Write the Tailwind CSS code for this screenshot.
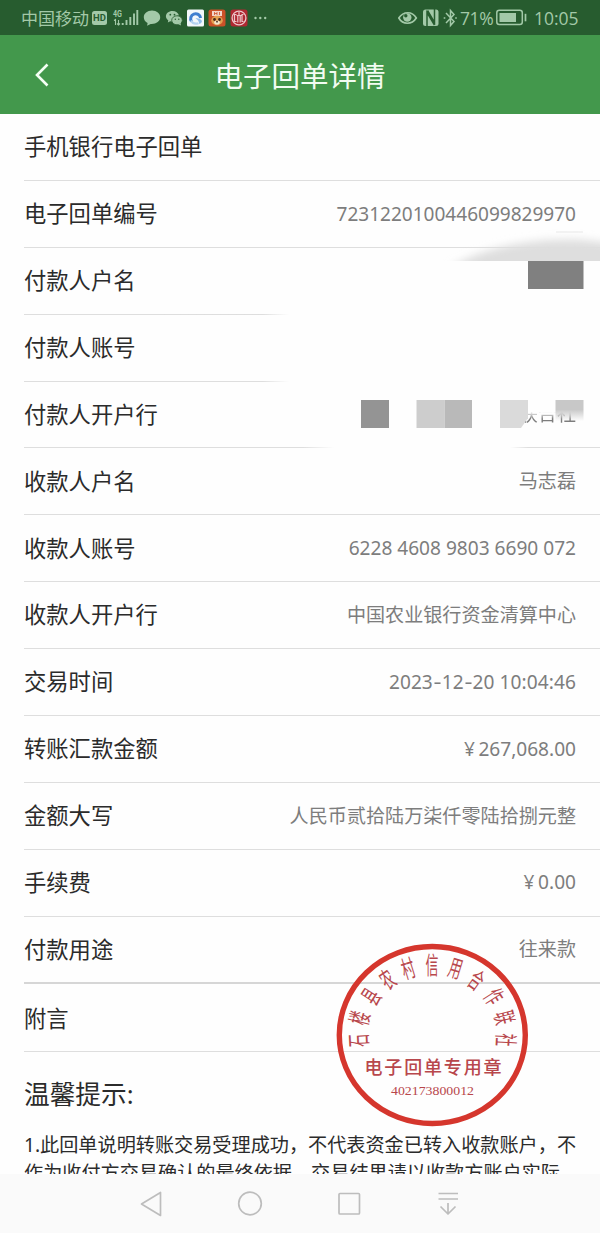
<!DOCTYPE html>
<html lang="zh-CN">

<head>
    <meta charset="UTF-8">
    <meta name="viewport" content="width=device-width, initial-scale=1.0">
    <title>电子回单详情</title>
    <script src="https://cdn.jsdelivr.net/npm/@tailwindcss/browser@4"></script>
</head>

<body class="bg-white">
    <div class="relative flex h-[1233px] w-[600px] flex-col overflow-hidden bg-[#fefefe] font-['Noto_Sans','Noto_Sans_CJK_SC',sans-serif] text-[#2b2b2b]">
        <!-- Status bar -->
        <div class="flex h-[35px] shrink-0 items-center justify-between bg-[#275c2f] pr-[21px] pl-[21px] text-[#a3c9a8]">
            <div class="flex items-center">
                <span class="w-[68px] pt-px text-[17px] leading-[35px] whitespace-nowrap">中国移动</span>
                <svg class="ml-[3px]" width="158" height="20" viewBox="92 8 158 20">
                    <rect x="92" y="11" width="15" height="14" rx="2.5" fill="#a3c9a8" />
                    <text x="99.5" y="21.3" text-anchor="middle" font-size="9.500" font-weight="bold" font-family="Roboto, sans-serif" fill="#275c2f">HD</text>
                    <text x="113" y="16.7" font-size="9.500" font-weight="bold" font-family="Roboto, sans-serif" fill="#a3c9a8" textLength="9" lengthAdjust="spacingAndGlyphs">4G</text>
                    <path d="M114 20.500l1.500-1v5.500M118.500 20v5m-1.500-1.500l1.500 1.500l1.500-1.500" fill="none" stroke="#a3c9a8" stroke-width="1.100" />
                    <path d="M122.700 23v2M126.500 20v5M130.300 17v8M134 13.500v11.500M137.300 10v15" stroke="#a3c9a8" stroke-width="1.900" />
                    <path d="M152 10.500c-4.700 0-8.200 3-8.200 6.700c0 2.500 1.500 4.600 3.800 5.800l-.5 2.800l3.600-1.900c5.300.4 9.500-2.600 9.500-6.700c0-3.700-3.500-6.700-8.200-6.700z" fill="#a3c9a8" />
                    <path d="M172.500 11c-3.800 0-6.600 2.400-6.600 5.300c0 1.700 1 3.100 2.400 4.100l-.5 2l2.400-1.200c.9.200 1.800.3 2.700.3c-.3-3.400 2.500-6 6.100-6c-.7-2.700-3.300-4.500-6.500-4.500z" fill="#a3c9a8" />
                    <ellipse cx="177" cy="20.300" rx="5.300" ry="4.500" fill="#a3c9a8" stroke="#275c2f" stroke-width=".8" />
                    <path d="M178 24l3 1.500l-.5-2.500z" fill="#a3c9a8" />
                    <g fill="#275c2f"><circle cx="170.300" cy="14.700" r=".9" /><circle cx="174.500" cy="14.700" r=".9" /><circle cx="175.300" cy="19.300" r=".7" /><circle cx="178.800" cy="19.300" r=".7" /></g>
                    <rect x="187" y="9.500" width="17" height="17" rx="1.500" fill="#f3f8fb" />
                    <path d="M191.500 21.500A5 5 0 1 1 200.600 18" fill="none" stroke="#3f7fd0" stroke-width="3" />
                    <path d="M191 20.500c1.500 2.800 4.500 3.800 7.500 2.700" fill="none" stroke="#b5d3f0" stroke-width="2.200" />
                    <path d="M195.500 18.500c2.500-.5 5 .3 6.500 2.500c-.2 1.500-1.200 2.700-2.800 3c0-2.500-1.200-4.500-3.700-5.500z" fill="#8fbcea" />
                    <rect x="208.500" y="9.500" width="17" height="17" rx="2.500" fill="#cb5128" />
                    <path d="M212 11h10v5h-10z" fill="#f3d5c8" />
                    <path d="M214.500 12v3M217 12v3M219.500 12v3M214.500 13.500h2.500" stroke="#cb5128" stroke-width=".8" />
                    <ellipse cx="217" cy="20.500" rx="5.800" ry="4.700" fill="#e2a052" />
                    <circle cx="214.500" cy="19.500" r="1.400" fill="#492b1c" /><circle cx="219.500" cy="19.500" r="1.400" fill="#492b1c" />
                    <ellipse cx="217" cy="22.500" rx="2.800" ry="2" fill="#f5e6ce" /><circle cx="217" cy="21.700" r=".9" fill="#492b1c" />
                    <rect x="230.500" y="9.500" width="17" height="17" rx="2.500" fill="#b02832" />
                    <circle cx="239" cy="18" r="6.900" fill="none" stroke="#ecc6c9" stroke-width="1.300" />
                    <path d="M236.500 14.500h-2v7h2M237.800 16v6.500M239 12v3.500M236.500 15.500h5M240.200 16v6.500M243.500 14.500h-1.500v7h1.500" fill="none" stroke="#ecc6c9" stroke-width="1.200" />
                </svg>
                <svg class="ml-1" width="14" height="4" viewBox="0 0 14 4" fill="#a3c9a8">
                    <circle cx="1.500" cy="2" r="1.200" /><circle cx="6.300" cy="2" r="1.200" /><circle cx="11.200" cy="2" r="1.200" />
                </svg>
            </div>
            <div class="flex items-center">
                <svg width="62" height="20" viewBox="399 8 62 20" fill="none" stroke="#a3c9a8">
                    <path d="M399.800 18c4.500-7 13.500-7 17.500 0c-4.500 7-13.500 7-17.500 0z" stroke-width="1.700" />
                    <circle cx="408.300" cy="17.500" r="4.200" fill="#a3c9a8" stroke="none" />
                    <circle cx="406.800" cy="15.700" r="1.700" fill="#275c2f" stroke="none" />
                    <rect x="424" y="9.500" width="15.500" height="16.500" rx="2.500" fill="#a3c9a8" stroke="none" />
                    <path d="M428 26.500v-14l7.500 12.500M435.500 9v13.500l-7-12" stroke="#275c2f" stroke-width="1.500" />
                    <path d="M447 13l8 8.500l-3.500 4v-15l3.500 4l-8 8.500" stroke-width="1.500" />
                    <path d="M445.500 17.200v1.600M457 17.200v1.600" stroke-width="1.600" />
                </svg>
                <span class="w-[36px] pt-0.5 font-['Open_Sans'] text-[17.500px] leading-[35px] tracking-[-0.4px]">71%</span>
                <svg width="32" height="17" viewBox="0 0 32 17" fill="none" stroke="#a3c9a8">
                    <rect x=".8" y="1.300" width="25.500" height="14.200" rx="2.500" stroke-width="1.500" />
                    <rect x="3.500" y="4" width="16.500" height="9" fill="#a3c9a8" stroke="none" />
                    <path d="M29.500 4.800v7.500" stroke-width="1.700" />
                </svg>
                <span class="ml-[6px] w-[45px] pt-0.5 font-['Open_Sans'] text-[17.500px] leading-[35px] whitespace-nowrap">10:05</span>
            </div>
        </div>

        <!-- Title bar -->
        <header class="grid h-[79px] shrink-0 grid-cols-[100px_1fr_100px] items-center bg-[#43984c]">
            <svg class="mt-px ml-[34px]" width="16" height="24" viewBox="0 0 16 24" fill="none" stroke="#f4fff4" stroke-width="2.600">
                <path d="M13.500 1.500L3 12l10.500 10.500" />
            </svg>
            <h1 class="pt-1 text-center text-[28.500px] leading-[75px] text-[#f2fcf2]">电子回单详情</h1>
        </header>

        <!-- Receipt rows -->
        <main class="flex flex-1 flex-col overflow-hidden pl-6">
            <div class="flex h-[66.900px] shrink-0 items-center border-b border-[#dedede] pr-6">
                <span class="text-[22.300px]">手机银行电子回单</span>
            </div>
            <div class="flex h-[66.900px] shrink-0 items-center justify-between border-b border-[#dedede] pr-6">
                <span class="text-[22.300px]">电子回单编号</span>
                <span class="text-[19.050px] text-[#7d7d7d]">7231220100446099829970</span>
            </div>
            <div class="flex h-[66.900px] shrink-0 flex-col">
                <div class="flex flex-1 items-center text-[22.300px]">付款人户名</div>
                <div class="h-px w-[265px] bg-linear-to-r from-[#dedede] from-90% to-transparent"></div>
            </div>
            <div class="flex h-[66.900px] shrink-0 flex-col">
                <div class="flex flex-1 items-center text-[22.300px]">付款人账号</div>
                <div class="h-px w-[265px] bg-linear-to-r from-[#dedede] from-90% to-transparent"></div>
            </div>
            <div class="flex h-[66.900px] shrink-0 flex-col">
                <div class="flex flex-1 items-center justify-between pr-6">
                    <span class="text-[22.300px]">付款人开户行</span>
                    <span class="bg-linear-to-b from-transparent from-40% to-[#7d7d7d] to-65% bg-clip-text text-[19.100px] text-transparent">联合社</span>
                </div>
                <div class="flex justify-between">
                    <div class="h-px w-[310px] bg-linear-to-r from-[#dedede] from-90% to-transparent"></div>
                    <div class="h-px w-[90px] bg-linear-to-l from-[#dedede] from-80% to-transparent"></div>
                </div>
            </div>
            <div class="flex h-[66.900px] shrink-0 items-center justify-between border-b border-[#dedede] pr-6">
                <span class="text-[22.300px]">收款人户名</span>
                <span class="text-[19.100px] text-[#7d7d7d]">马志磊</span>
            </div>
            <div class="flex h-[66.900px] shrink-0 items-center justify-between border-b border-[#dedede] pr-6">
                <span class="text-[22.300px]">收款人账号</span>
                <span class="text-[19.100px] text-[#7d7d7d]">6228 4608 9803 6690 072</span>
            </div>
            <div class="flex h-[66.900px] shrink-0 items-center justify-between border-b border-[#dedede] pr-6">
                <span class="text-[22.300px]">收款人开户行</span>
                <span class="text-[19.100px] text-[#7d7d7d]">中国农业银行资金清算中心</span>
            </div>
            <div class="flex h-[66.900px] shrink-0 items-center justify-between border-b border-[#dedede] pr-6">
                <span class="text-[22.300px]">交易时间</span>
                <span class="text-[19.100px] text-[#7d7d7d]">2023<span class="inline-block w-[9px] origin-center scale-x-130 text-center">-</span>12<span class="inline-block w-[9px] origin-center scale-x-130 text-center">-</span>20 <span class="tracking-[0.1px]">10:04:46</span></span>
            </div>
            <div class="flex h-[66.900px] shrink-0 items-center justify-between border-b border-[#dedede] pr-6">
                <span class="text-[22.300px]">转账汇款金额</span>
                <span class="text-[19.100px] text-[#7d7d7d]"><span class="tracking-[-0.7px]">¥ </span>267,068.00</span>
            </div>
            <div class="flex h-[66.900px] shrink-0 items-center justify-between border-b border-[#dedede] pr-6">
                <span class="text-[22.300px]">金额大写</span>
                <span class="text-[19.100px] text-[#7d7d7d]">人民币贰拾陆万柒仟零陆拾捌元整</span>
            </div>
            <div class="flex h-[66.900px] shrink-0 items-center justify-between border-b border-[#dedede] pr-6">
                <span class="text-[22.300px]">手续费</span>
                <span class="text-[19.100px] text-[#7d7d7d]"><span class="tracking-[-0.7px]">¥ </span>0.00</span>
            </div>
            <div class="flex h-[67.200px] shrink-0 items-center justify-between border-b-2 border-[#d6d6d6] pr-6">
                <span class="text-[22.300px]">付款用途</span>
                <span class="text-[19.100px] text-[#7d7d7d]">往来款</span>
            </div>
            <div class="flex h-[68px] shrink-0 items-center border-b border-[#dedede] pt-0.5 pr-6">
                <span class="text-[22.300px]">附言</span>
            </div>
            <h2 class="mt-[23px] shrink-0 text-[25.700px] leading-10">温馨提示:</h2>
            <p class="mt-[16px] shrink-0 text-[19.150px] leading-[28px] whitespace-nowrap">1.此回单说明转账交易受理成功，不代表资金已转入收款账户，不<br>作为收付方交易确认的最终依据，交易结果请以收款方账户实际</p>
        </main>

        <!-- System navigation -->
        <nav class="flex h-[59px] shrink-0 items-center justify-center bg-[#fafafa]">
            <svg width="322" height="28" viewBox="139 1190 322 28" fill="none" stroke="#bdbdbd" stroke-width="1.700" stroke-linejoin="round">
                <path d="M141.500 1204l19-11.500v23z" />
                <circle cx="250" cy="1203.500" r="11.300" />
                <rect x="339" y="1193.500" width="20.500" height="20.500" rx="1" />
                <path d="M438.500 1193.500h19.500M438.500 1199h19.500M448 1203v11M440.500 1206.500l7.500 7.500l7.500-7.500" />
            </svg>
        </nav>

        <!-- Masked payer details -->
        <svg class="absolute top-[228px] left-[350px]" width="250" height="206" viewBox="350 228 250 206">
            <defs>
                <filter id="soft" x="-20%" y="-50%" width="140%" height="200%">
                    <feGaussianBlur stdDeviation="4" />
                </filter>
                <clipPath id="smear">
                    <rect x="440" y="228" width="160" height="33" />
                </clipPath>
                <linearGradient id="fade" x1="0" y1="0" x2="0" y2="1">
                    <stop offset=".45" stop-color="#c8c8c8" />
                    <stop offset="1" stop-color="#c8c8c8" stop-opacity="0" />
                </linearGradient>
            </defs>
            <rect x="556" y="231" width="27" height="2" fill="#f3f3f3" />
            <g clip-path="url(#smear)">
                <path d="M450 268C482 248 525 239.500 570 239.500Q595 239.500 625 247V285H450z" fill="#dedede" filter="url(#soft)" />
            </g>
            <rect x="528" y="261" width="55.500" height="28" fill="#808080" />
            <rect x="361" y="400" width="28" height="28" fill="#949494" />
            <rect x="416.500" y="400" width="28" height="28" fill="#cdcdcd" />
            <rect x="444.500" y="400" width="27.500" height="28" fill="#b9b9b9" />
            <path d="M500 400h28v18l-7 10h-21z" fill="#dadada" />
            <rect x="555.500" y="400" width="28" height="21" fill="url(#fade)" />
        </svg>

        <!-- Round seal -->
        <svg class="absolute top-[940px] left-[332px]" width="200" height="190" viewBox="332 940 200 190">
            <ellipse cx="432.300" cy="1035" rx="93" ry="88.500" fill="none" stroke="#d5362d" stroke-width="5.400" />
            <g font-family="'Noto Sans CJK SC', sans-serif" font-size="24" fill="#b8474c" text-anchor="middle">
                <text transform="translate(358.500 1040.500) rotate(-93) scale(.54 1)" y="9">石</text>
                <text transform="translate(359.500 1018) rotate(-76) scale(.54 1)" y="9">楼</text>
                <text transform="translate(371 996.500) rotate(-57) scale(.54 1)" y="9">县</text>
                <text transform="translate(387.500 979.500) rotate(-35) scale(.54 1)" y="9">农</text>
                <text transform="translate(408 968.500) rotate(-17) scale(.54 1)" y="9">村</text>
                <text transform="translate(432 965) scale(.54 1)" y="9">信</text>
                <text transform="translate(455.500 968) rotate(17) scale(.54 1)" y="9">用</text>
                <text transform="translate(476.500 980) rotate(35) scale(.54 1)" y="9">合</text>
                <text transform="translate(494 996.500) rotate(57) scale(.54 1)" y="9">作</text>
                <text transform="translate(504.500 1017.500) rotate(76) scale(.54 1)" y="9">联</text>
                <text transform="translate(506 1040) rotate(93) scale(.54 1)" y="9">社</text>
            </g>
            <text x="433" y="1074" text-anchor="middle" font-family="'Noto Sans CJK SC', sans-serif" font-size="18" font-weight="500" fill="#b8474c" textLength="137">电子回单专用章</text>
            <text x="432.500" y="1095" text-anchor="middle" font-family="'Liberation Serif', serif" font-size="13.500" fill="#b8474c" textLength="83" lengthAdjust="spacingAndGlyphs">402173800012</text>
        </svg>
    </div>
</body>

</html>
